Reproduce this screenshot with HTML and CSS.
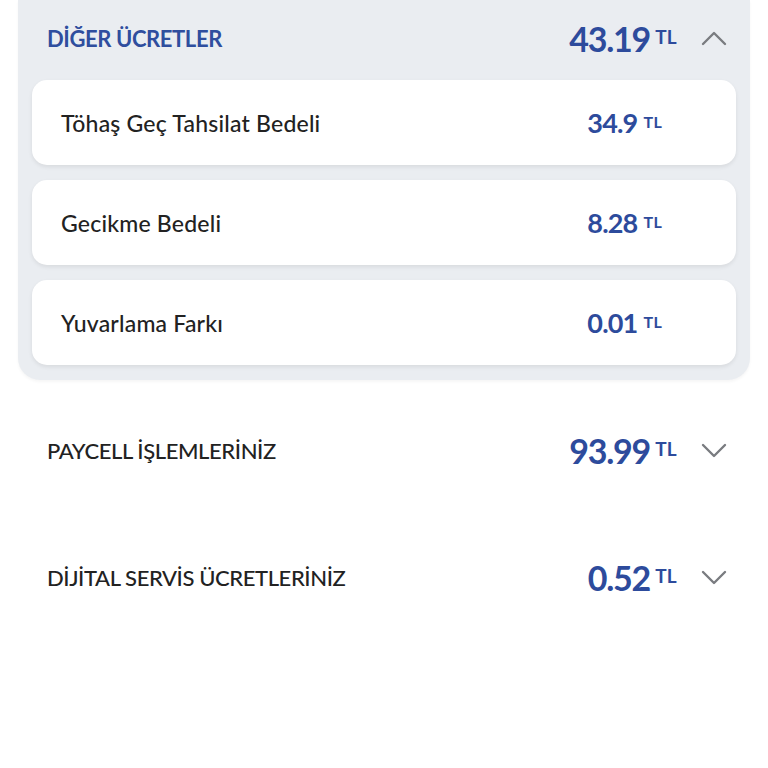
FILE: index.html
```html
<!DOCTYPE html>
<html>
<head>
    <link rel="stylesheet" href="styles.css">
</head>
<body>
    <div class="page">
        <div class="group open">
            <div class="group-head">
                <span class="group-title">DİĞER ÜCRETLER</span>
                <span class="amount big">43.19<span class="cur">TL</span></span>
                <svg class="chev" viewBox="0 0 26 16"><path d="M2 14 L13 3 L24 14"/></svg>
            </div>
            <div class="fee">
                <span class="fee-name">Töhaş Geç Tahsilat Bedeli</span>
                <span class="amount">34.9<span class="cur">TL</span></span>
            </div>
            <div class="fee">
                <span class="fee-name">Gecikme Bedeli</span>
                <span class="amount">8.28<span class="cur">TL</span></span>
            </div>
            <div class="fee">
                <span class="fee-name">Yuvarlama Farkı</span>
                <span class="amount">0.01<span class="cur">TL</span></span>
            </div>
        </div>

        <div class="section">
            <span class="section-title">PAYCELL İŞLEMLERİNİZ</span>
            <span class="amount big">93.99<span class="cur">TL</span></span>
            <svg class="chev" viewBox="0 0 26 16"><path d="M2 2 L13 13 L24 2"/></svg>
        </div>
        <div class="section">
            <span class="section-title">DİJİTAL SERVİS ÜCRETLERİNİZ</span>
            <span class="amount big">0.52<span class="cur">TL</span></span>
            <svg class="chev" viewBox="0 0 26 16"><path d="M2 2 L13 13 L24 2"/></svg>
        </div>
    </div>
</body>
</html>
```

FILE: styles.css
```css
body {
    margin: 0;
    padding: 0;
    background-color: #FFF;
    font-family: 'Lato', 'Noto Sans', sans-serif;
    color: #222;
}
.page {
    padding: 0 18px;
}
.group {
    background-color: #EAEDF1;
    border-radius: 0 0 22px 22px;
    padding: 0 14px 15px;
    box-shadow: 0 2px 3px rgba(0,0,0,0.04);
}
.group-head {
    display: flex;
    align-items: center;
    height: 76px;
    margin-bottom: 4px;
    padding: 0 9px 0 15px;
}
.group-title {
    flex: 1;
    font-size: 22px;
    font-weight: 700;
    letter-spacing: -0.4px;
    color: #2F4E9E;
}
.amount {
    display: flex;
    align-items: flex-start;
    font-size: 27px;
    font-weight: 700;
    color: #2D4B9C;
    letter-spacing: -0.8px;
}
.amount.big {
    font-size: 34px;
    letter-spacing: -1.2px;
}
.cur {
    font-size: 16px;
    margin-left: 6px;
    margin-top: 6px;
    letter-spacing: 0.3px;
}
.amount.big .cur {
    font-size: 19px;
    margin-left: 5px;
    margin-top: 7px;
}
.chev {
    width: 26px;
    height: 16px;
    margin-left: 24px;
    fill: none;
    stroke: #7A7C80;
    stroke-width: 2.4;
    stroke-linecap: round;
    stroke-linejoin: round;
}
.fee {
    display: flex;
    align-items: center;
    justify-content: space-between;
    height: 85px;
    margin-bottom: 15px;
    padding: 0 74px 0 29px;
    background-color: #FFF;
    border-radius: 15px;
    box-shadow: 0 2px 4px rgba(0,0,0,0.08);
}
.fee:last-child {
    margin-bottom: 0;
}
.fee-name {
    font-size: 23px;
    font-weight: 500;
    letter-spacing: 0.2px;
}
.section {
    display: flex;
    align-items: center;
    height: 127px;
    padding: 0 23px 0 29px;
}
.section:nth-child(2) {
    margin-top: 7px;
}
.section-title {
    flex: 1;
    font-size: 22px;
    font-weight: 500;
    letter-spacing: -0.4px;
    color: #222;
}
```
